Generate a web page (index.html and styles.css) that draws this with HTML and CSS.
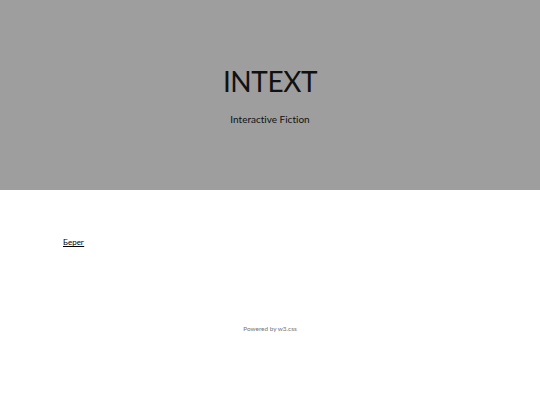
FILE: index.html
```html
<!DOCTYPE html>
<html>
<head>
<meta charset="utf-8">
<link rel="stylesheet" href="styles.css">
</head>
<body>
<header class="hero">
  <h1 class="title">INTEXT</h1>
  <p class="subtitle">Interactive Fiction</p>
</header>
<main class="content">
  <a class="story" href="#">Берег</a>
</main>
<footer class="footer">Powered by <a href="#">w3.css</a></footer>
</body>
</html>
```
FILE: styles.css
```css
html, body { margin: 0; padding: 0; }
body { font-family: Lato, "Noto Sans", sans-serif; background: #fff; color: #000; font-variant-ligatures: none; }
.hero {
  background: #9e9e9e;
  height: 190px;
  display: flex;
  flex-direction: column;
  align-items: center;
  justify-content: center;
  text-align: center;
}
.title { margin: 0; font-weight: 400; font-size: 28px; letter-spacing: -0.4px; line-height: 1; padding-bottom: 6px; color: #111; }
.subtitle { margin: 13px 0 0; font-size: 10px; line-height: 1; color: #111; }
.content { padding: 39px 63px 0; height: 96px; }
.story { color: #000; font-size: 8px; line-height: 1; }
.footer { text-align: center; font-size: 6.4px; color: #757575; }
.footer a { color: #757575; }
```
